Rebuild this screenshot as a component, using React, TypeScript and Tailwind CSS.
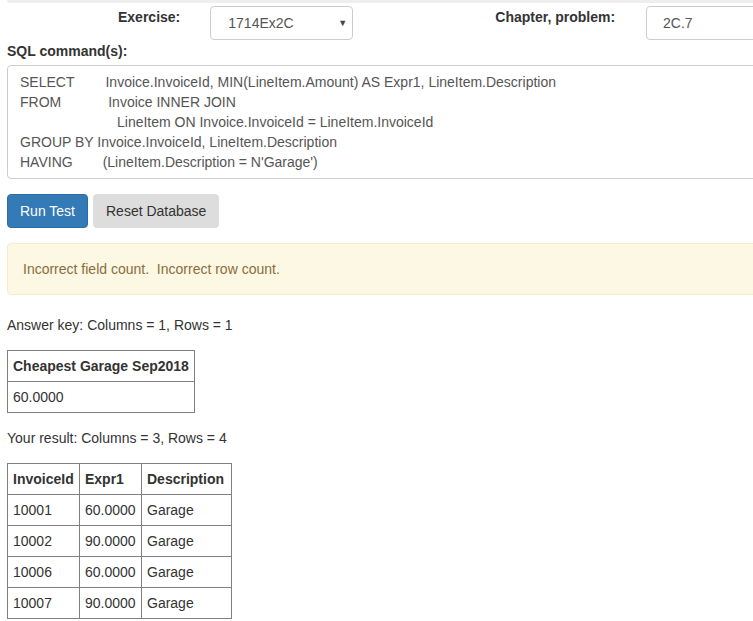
import React from "react";

const font = { fontFamily: '"Liberation Sans", Arial, sans-serif' };

export default function App() {
  const rows = [
    ["10001", "60.0000", "Garage"],
    ["10002", "90.0000", "Garage"],
    ["10006", "60.0000", "Garage"],
    ["10007", "90.0000", "Garage"],
  ];
  return (
    <div className="w-[753px] h-[621px] overflow-hidden bg-white text-[14px] leading-[20px] text-[#333]" style={font}>
      <div className="ml-[7px] w-[800px] h-[3px] bg-[#eeeeee] rounded-b-[4px]" />
      <div className="flex items-start w-[900px] mt-[3px]">
        <div className="ml-[118px] mt-[1px] font-bold">Exercise:</div>
        <div className="ml-[30px] w-[143px] h-[34px] border border-[#cccccc] rounded-[4px] flex items-center justify-between pl-[17px] pr-[5px] text-[#555]">
          <span>1714Ex2C</span>
          <span className="text-[9px] text-[#444]">▼</span>
        </div>
        <div className="ml-[142px] mt-[1px] font-bold">Chapter, problem:</div>
        <div className="ml-[31px] w-[150px] h-[34px] border border-[#cccccc] rounded-[4px] flex items-center pl-[16px] text-[#555]">
          2C.7
        </div>
      </div>
      <div className="ml-[7px] mt-[1px] font-bold">SQL command(s):</div>
      <div className="ml-[7px] mt-[4px] w-[800px] border border-[#cccccc] rounded-[4px] px-[12px] py-[6px] text-[#555] whitespace-pre">
        <div><span>SELECT</span><span className="ml-[31px]">Invoice.InvoiceId, MIN(LineItem.Amount) AS Expr1, LineItem.Description</span></div>
        <div><span>FROM</span><span className="ml-[47px]">Invoice INNER JOIN</span></div>
        <div><span className="ml-[97px]">LineItem ON Invoice.InvoiceId = LineItem.InvoiceId</span></div>
        <div>GROUP BY Invoice.InvoiceId, LineItem.Description</div>
        <div><span>HAVING</span><span className="ml-[30px]">(LineItem.Description = N'Garage')</span></div>
      </div>
      <div className="flex ml-[7px] mt-[15px] gap-[5px]">
        <button className="h-[34px] px-[12px] bg-[#337ab7] border border-[#2e6da4] rounded-[4px] text-white">Run Test</button>
        <button className="h-[34px] px-[12px] bg-[#dddddd] border border-[#dddddd] rounded-[4px] text-[#333]">Reset Database</button>
      </div>
      <div className="ml-[7px] mt-[15px] w-[800px] bg-[#fcf8e3] border border-[#faebcc] rounded-[4px] p-[15px] text-[#8a6d3b]">
        Incorrect field count.&nbsp; Incorrect row count.
      </div>
      <div className="ml-[7px] mt-[20px]">Answer key: Columns = 1, Rows = 1</div>
      <table className="ml-[7px] mt-[15px] border-collapse w-[188px]">
        <thead>
          <tr>
            <th className="border border-[#808080] px-[5px] py-[5px] text-left font-bold">Cheapest Garage Sep2018</th>
          </tr>
        </thead>
        <tbody>
          <tr>
            <td className="border border-[#808080] px-[5px] py-[5px]">60.0000</td>
          </tr>
        </tbody>
      </table>
      <div className="ml-[7px] mt-[15px]">Your result: Columns = 3, Rows = 4</div>
      <table className="ml-[7px] mt-[15px] border-collapse w-[224px] table-fixed">
        <colgroup>
          <col className="w-[72px]" />
          <col className="w-[62px]" />
          <col className="w-[90px]" />
        </colgroup>
        <thead>
          <tr>
            <th className="border border-[#808080] px-[5px] py-[5px] text-left font-bold">InvoiceId</th>
            <th className="border border-[#808080] px-[5px] py-[5px] text-left font-bold">Expr1</th>
            <th className="border border-[#808080] px-[5px] py-[5px] text-left font-bold">Description</th>
          </tr>
        </thead>
        <tbody>
          {rows.map((r) => (
            <tr key={r[0]}>
              {r.map((c, i) => (
                <td key={i} className="border border-[#808080] px-[5px] py-[5px]">{c}</td>
              ))}
            </tr>
          ))}
        </tbody>
      </table>
    </div>
  );
}
